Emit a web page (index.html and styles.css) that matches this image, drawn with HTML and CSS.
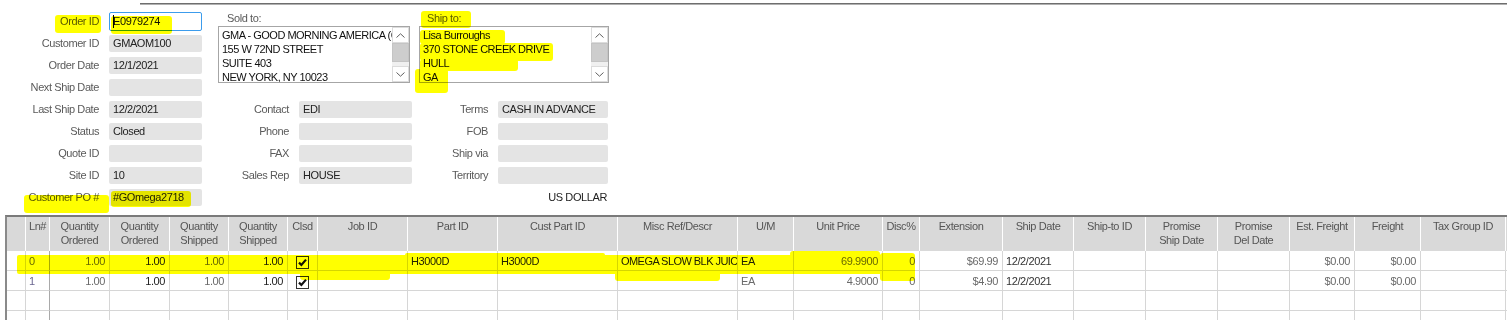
FILE: index.html
```html
<!DOCTYPE html>
<html>
<head>
<meta charset="utf-8">
<title>Sales Order</title>
<link rel="stylesheet" href="styles.css">
</head>
<body>
<div class="page">
  <div class="topline"></div>
  <div class="form">
    <div class="colA">
      <div class="row"><span class="lbl">Order ID</span><span class="fld focus"><span class="caret"></span>E0979274</span></div>
      <div class="row"><span class="lbl">Customer ID</span><span class="fld">GMAOM100</span></div>
      <div class="row"><span class="lbl">Order Date</span><span class="fld">12/1/2021</span></div>
      <div class="row"><span class="lbl">Next Ship Date</span><span class="fld"></span></div>
      <div class="row"><span class="lbl">Last Ship Date</span><span class="fld">12/2/2021</span></div>
      <div class="row"><span class="lbl">Status</span><span class="fld">Closed</span></div>
      <div class="row"><span class="lbl">Quote ID</span><span class="fld"></span></div>
      <div class="row"><span class="lbl">Site ID</span><span class="fld">10</span></div>
      <div class="row"><span class="lbl">Customer PO #</span><span class="fld">#GOmega2718</span></div>
    </div>
    <div class="colB">
      <div class="boxlbl">Sold to:</div>
      <div class="listbox">
        <div class="lines">
          <div>GMA - GOOD MORNING AMERICA (CORP)</div>
          <div>155 W 72ND STREET</div>
          <div>SUITE 403</div>
          <div>NEW YORK, NY 10023</div>
        </div>
        <div class="sb">
          <div class="sbbtn"><svg width="9" height="5" viewBox="0 0 9 5"><path d="M0.5 4.5 L4.5 0.8 L8.5 4.5" fill="none" stroke="#606060" stroke-width="1"/></svg></div>
          <div class="thumb"></div>
          <div class="track"></div>
          <div class="sbbtn"><svg width="9" height="5" viewBox="0 0 9 5"><path d="M0.5 0.5 L4.5 4.2 L8.5 0.5" fill="none" stroke="#606060" stroke-width="1"/></svg></div>
        </div>
      </div>
      <div class="rows">
        <div class="row"><span class="lbl">Contact</span><span class="fld">EDI</span></div>
        <div class="row"><span class="lbl">Phone</span><span class="fld"></span></div>
        <div class="row"><span class="lbl">FAX</span><span class="fld"></span></div>
        <div class="row"><span class="lbl">Sales Rep</span><span class="fld">HOUSE</span></div>
      </div>
    </div>
    <div class="colC">
      <div class="boxlbl">Ship to:</div>
      <div class="listbox">
        <div class="lines">
          <div>Lisa Burroughs</div>
          <div>370 STONE CREEK DRIVE</div>
          <div>HULL</div>
          <div>GA</div>
        </div>
        <div class="sb">
          <div class="sbbtn"><svg width="9" height="5" viewBox="0 0 9 5"><path d="M0.5 4.5 L4.5 0.8 L8.5 4.5" fill="none" stroke="#606060" stroke-width="1"/></svg></div>
          <div class="thumb"></div>
          <div class="track"></div>
          <div class="sbbtn"><svg width="9" height="5" viewBox="0 0 9 5"><path d="M0.5 0.5 L4.5 4.2 L8.5 0.5" fill="none" stroke="#606060" stroke-width="1"/></svg></div>
        </div>
      </div>
      <div class="rows">
        <div class="row"><span class="lbl">Terms</span><span class="fld">CASH IN ADVANCE</span></div>
        <div class="row"><span class="lbl">FOB</span><span class="fld"></span></div>
        <div class="row"><span class="lbl">Ship via</span><span class="fld"></span></div>
        <div class="row"><span class="lbl">Territory</span><span class="fld"></span></div>
        <div class="row currency">US DOLLAR</div>
      </div>
    </div>
  </div>

  <div class="gridwrap">
    <table class="grid">
      <colgroup>
        <col class="w19"><col class="w24"><col class="w60"><col class="w60"><col class="w59"><col class="w59"><col class="w30">
        <col class="w90"><col class="w90"><col class="w120"><col class="w120"><col class="w56"><col class="w89"><col class="w37">
        <col class="w83"><col class="w71"><col class="w72"><col class="w72"><col class="w72"><col class="w65"><col class="w66"><col class="w85"><col class="w1">
      </colgroup>
      <thead>
        <tr>
          <th class="sel"></th>
          <th>Ln#</th>
          <th>Quantity<br>Ordered</th>
          <th>Quantity<br>Ordered</th>
          <th>Quantity<br>Shipped</th>
          <th>Quantity<br>Shipped</th>
          <th>Clsd</th>
          <th>Job ID</th>
          <th>Part ID</th>
          <th>Cust Part ID</th>
          <th>Misc Ref/Descr</th>
          <th>U/M</th>
          <th>Unit Price</th>
          <th>Disc%</th>
          <th>Extension</th>
          <th>Ship Date</th>
          <th>Ship-to ID</th>
          <th>Promise<br>Ship Date</th>
          <th>Promise<br>Del Date</th>
          <th>Est. Freight</th>
          <th>Freight</th>
          <th>Tax Group ID</th>
          <th class="fill"></th>
        </tr>
      </thead>
      <tbody>
        <tr>
          <td class="sel"></td>
          <td class="ln ro">0</td>
          <td class="num ro">1.00</td>
          <td class="num">1.00</td>
          <td class="num ro">1.00</td>
          <td class="num">1.00</td>
          <td class="clsd"><span class="cb"><svg width="11" height="11" viewBox="0 0 11 11"><path d="M2 5.6 L4.4 8 L9 2.6" fill="none" stroke="#111" stroke-width="2.2"/></svg></span></td>
          <td></td>
          <td>H3000D</td>
          <td>H3000D</td>
          <td class="clip">OMEGA SLOW BLK JUICER</td>
          <td>EA</td>
          <td class="num ro">69.9900</td>
          <td class="num ro">0</td>
          <td class="num ro">$69.99</td>
          <td class="dt">12/2/2021</td>
          <td></td>
          <td></td>
          <td></td>
          <td class="num ro">$0.00</td>
          <td class="num ro">$0.00</td>
          <td></td>
          <td class="fill"></td>
        </tr>
        <tr>
          <td class="sel"></td>
          <td class="ln ro lnp">1</td>
          <td class="num ro">1.00</td>
          <td class="num">1.00</td>
          <td class="num ro">1.00</td>
          <td class="num">1.00</td>
          <td class="clsd"><span class="cb"><svg width="11" height="11" viewBox="0 0 11 11"><path d="M2 5.6 L4.4 8 L9 2.6" fill="none" stroke="#111" stroke-width="2.2"/></svg></span></td>
          <td></td>
          <td></td>
          <td></td>
          <td></td>
          <td class="ro">EA</td>
          <td class="num ro">4.9000</td>
          <td class="num ro">0</td>
          <td class="num ro">$4.90</td>
          <td class="dt">12/2/2021</td>
          <td></td>
          <td></td>
          <td></td>
          <td class="num ro">$0.00</td>
          <td class="num ro">$0.00</td>
          <td></td>
          <td class="fill"></td>
        </tr>
        <tr>
          <td class="sel"></td><td class="ln"></td><td></td><td></td><td></td><td></td><td></td><td></td><td></td><td></td><td></td><td></td><td></td><td></td><td></td><td></td><td></td><td></td><td></td><td></td><td></td><td></td><td class="fill"></td>
        </tr>
        <tr>
          <td class="sel"></td><td class="ln"></td><td></td><td></td><td></td><td></td><td></td><td></td><td></td><td></td><td></td><td></td><td></td><td></td><td></td><td></td><td></td><td></td><td></td><td></td><td></td><td></td><td class="fill"></td>
        </tr>
      </tbody>
    </table>
  </div>

  <div class="hl h-orderlbl"></div>
  <div class="hl h-orderval"></div>
  <div class="hl h-polbl"></div>
  <div class="hl h-poval"></div>
  <div class="hl h-shiplbl"></div>
  <div class="hl h-ship1"></div>
  <div class="hl h-ship2"></div>
  <div class="hl h-ship3"></div>
  <div class="hl h-ship4"></div>
  <div class="hl h-row"></div>
  <div class="hl h-row-job"></div>
  <div class="hl h-row-part"></div>
  <div class="hl h-row-misc"></div>
  <div class="hl h-row-price"></div>
  <div class="hl h-row-disc"></div>
</div>
</body>
</html>
```

FILE: styles.css
```css
* { box-sizing: border-box; }
html, body { margin: 0; padding: 0; overflow: hidden; }
body {
  width: 1507px;
  height: 320px;
  background: #fff;
  font-family: "Liberation Sans", Arial, sans-serif;
  font-size: 11px;
  letter-spacing: -0.4px;
  color: #222;
}
.page { position: relative; width: 1507px; height: 320px; }

.topline {
  margin: 3px 0 0 140px;
  height: 2px;
  border-top: 1px solid #6e6e6e;
  border-bottom: 1px solid #b0b0b0;
}

.form { display: flex; margin-top: 5px; height: 198px; }

.row { display: flex; align-items: center; height: 22px; }
.lbl { text-align: right; color: #5a5a5a; white-space: nowrap; margin-right: 10px; }
.fld {
  height: 17px;
  line-height: 17px;
  background: #e4e4e4;
  border-radius: 2px;
  padding-left: 4px;
  white-space: nowrap;
  overflow: hidden;
  color: #222;
}
.fld.focus {
  position: relative;
  height: 19px;
  line-height: 17px;
  background: #fff;
  border: 1px solid #3c9cec;
  padding-left: 3px;
  color: #111;
}
.caret {
  position: absolute;
  left: 3px;
  top: 2px;
  width: 1px;
  height: 13px;
  background: #000;
}

.colA { width: 202px; }
.colA .lbl { width: 99px; }
.colA .fld { width: 93px; }

.colB { width: 194px; margin-left: 16px; }
.colB .lbl { width: 71px; }
.colB .fld { width: 113px; }
.colB .listbox { width: 192px; }

.colC { width: 190px; margin-left: 7px; }
.colC .lbl { width: 69px; }
.colC .fld { width: 110px; }
.colC .listbox { width: 190px; }

.boxlbl { height: 16px; line-height: 16px; padding-left: 9px; color: #5a5a5a; }
.colC .boxlbl { padding-left: 8px; }

.listbox {
  height: 57px;
  border: 1px solid #a6a6a6;
  display: flex;
  background: #fff;
}
.lines {
  flex: 1;
  min-width: 0;
  padding: 1px 0 0 3px;
  line-height: 14px;
  color: #111;
  overflow: hidden;
  white-space: nowrap;
  letter-spacing: -0.5px;
}
.sb {
  width: 17px;
  flex: none;
  display: flex;
  flex-direction: column;
  background: #f0f0f0;
}
.sbbtn {
  height: 16px;
  display: flex;
  align-items: center;
  justify-content: center;
  background: #fff;
  border: 1px solid #dcdcdc;
}
.thumb { height: 19px; background: #cdcdcd; border: 1px solid #c4c4c4; }
.track { flex: 1; }

.rows { margin-top: 15px; }
.currency { justify-content: flex-end; padding-right: 2px; color: #222; }

.gridwrap {
  margin: 7px 0 0 5px;
  border-left: 2px solid #8a8a8a;
  border-top: 2px solid #7a7a7a;
}
.grid {
  table-layout: fixed;
  border-collapse: separate;
  border-spacing: 0;
  width: 1500px;
}
.w1 { width: 1px; } .w19 { width: 19px; } .w24 { width: 24px; } .w30 { width: 30px; }
.w37 { width: 37px; } .w56 { width: 56px; } .w59 { width: 59px; } .w60 { width: 60px; }
.w65 { width: 65px; } .w66 { width: 66px; } .w71 { width: 71px; } .w72 { width: 72px; }
.w83 { width: 83px; } .w85 { width: 85px; } .w89 { width: 89px; } .w90 { width: 90px; }
.w120 { width: 120px; }

.grid th {
  height: 34px;
  padding: 2px 1px 0;
  background: #d9d9d9;
  border-right: 1px solid #fff;
  color: #555;
  font-weight: normal;
  vertical-align: top;
  line-height: 14px;
  text-align: center;
  white-space: nowrap;
  overflow: hidden;
}
.grid th.fill { border-right: none; }
.grid td {
  height: 20px;
  padding: 0 4px 0 3px;
  border-right: 1px solid #d6d6d6;
  border-bottom: 1px solid #d6d6d6;
  white-space: nowrap;
  overflow: hidden;
  color: #222;
  line-height: 18px;
}
.grid td.clip { padding-right: 0; letter-spacing: -0.55px; }
.grid td.fill { border-right: none; padding: 0; }
.grid td.ln { border-right-color: #a9a9a9; }
.grid td.num { text-align: right; }
.grid td.ro { color: #6a6a6a; }
.grid td.lnp { color: #6a6590; }
.grid td.dt { color: #333; }
.grid td.clsd { text-align: center; vertical-align: bottom; padding: 0 0 1px 0; line-height: 0; }
.cb {
  display: inline-block;
  width: 13px;
  height: 13px;
  border: 1px solid #333;
  background: #fff;
}
.cb svg { display: block; }

.hl {
  position: absolute;
  background: #ffff00;
  mix-blend-mode: multiply;
  border-radius: 3px;
}
.h-orderlbl { left: 55px; top: 12px; width: 46px; height: 18px; }
.h-orderval { left: 111px; top: 13px; width: 61px; height: 18px; }
.h-polbl { left: 24px; top: 192px; width: 85px; height: 18px; }
.h-poval { left: 111px; top: 188px; width: 80px; height: 16px; }
.h-shiplbl { left: 421px; top: 8px; width: 50px; height: 17px; }
.h-ship1 { left: 420px; top: 27px; width: 85px; height: 14px; }
.h-ship2 { left: 420px; top: 40px; width: 133px; height: 18px; }
.h-ship3 { left: 420px; top: 56px; width: 98px; height: 12px; }
.h-ship4 { left: 415px; top: 66px; width: 33px; height: 24px; }
.h-row { left: 17px; top: 252px; width: 898px; height: 19px; border-radius: 2px; }
.h-row-job { left: 300px; top: 262px; width: 90px; height: 15px; }
.h-row-part { left: 405px; top: 250px; width: 200px; height: 4px; }
.h-row-misc { left: 615px; top: 266px; width: 105px; height: 12px; }
.h-row-price { left: 790px; top: 248px; width: 90px; height: 6px; }
.h-row-disc { left: 880px; top: 250px; width: 35px; height: 28px; }
```
